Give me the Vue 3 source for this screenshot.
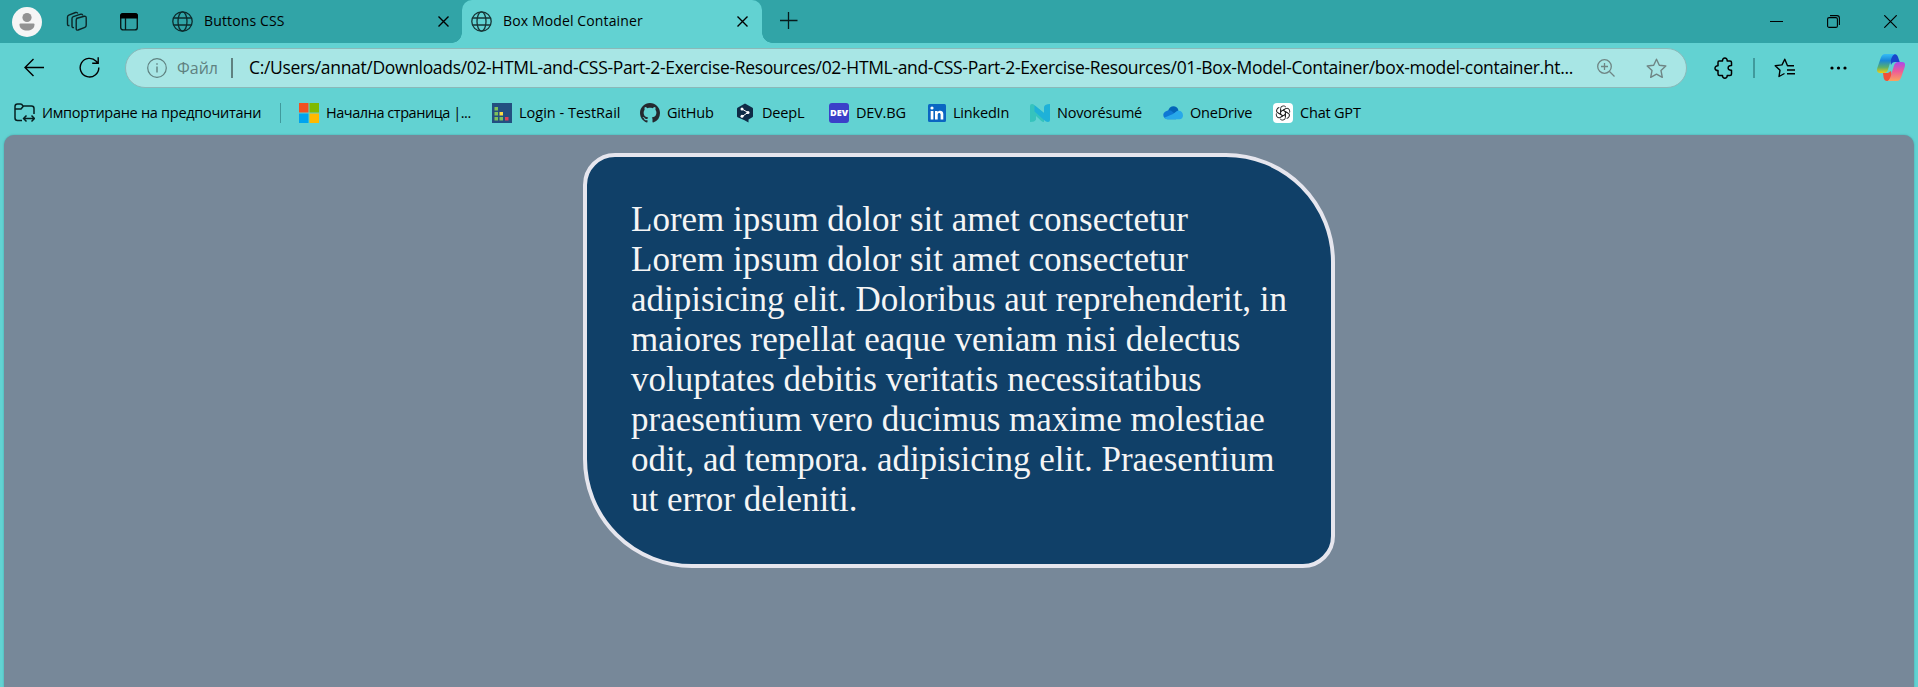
<script setup>
const lines = [
  'Lorem ipsum dolor sit amet consectetur',
  'Lorem ipsum dolor sit amet consectetur',
  'adipisicing elit. Doloribus aut reprehenderit, in',
  'maiores repellat eaque veniam nisi delectus',
  'voluptates debitis veritatis necessitatibus',
  'praesentium vero ducimus maxime molestiae',
  'odit, ad tempora. adipisicing elit. Praesentium',
  'ut error deleniti.',
]
</script>

<template>
  <div class="window">
    <header class="tabstrip">
      <div class="lead">
        <svg class="avatar" width="30" height="30" viewBox="0 0 30 30"><circle cx="15" cy="15" r="15" fill="#f5f5f5"/><circle cx="15" cy="10.5" r="4.6" fill="#929292"/><path d="M8.5 16.500h13q1 0 1 1c0 4-3.500 6-7.500 6s-7.500-2-7.500-6q0-1 1-1z" fill="#929292"/></svg>
        <svg class="spaces" width="22" height="22" viewBox="0 0 22 22" fill="none" stroke="#0c2526" stroke-width="1.400"><path d="M10.200 7.500l8-2.200q2-.4 2 1.500v7.500q0 1.500-1.300 2l-6.800 2.700q-1.900.6-1.900-1.300V9q0-1.200 1-1.500zM8 16.500q-2 .5-2-1.300V7.500q0-1.300 1.300-1.800l7.500-2.500q1.600-.4 1.900 1.300M3.500 14.500Q1.500 15 1.500 13V6q0-1.400 1.300-1.900L9.500 1.500q1.800-.5 2.300 1"/></svg>
        <svg class="vtabs" width="18" height="18" viewBox="0 0 18 18"><rect x=".7" y=".7" width="16.600" height="16.200" rx="2.500" fill="none" stroke="#071c1d" stroke-width="1.400"/><path d="M0 5.500V3q0-3 3-3h12q3 0 3 3v2.500z" fill="#000"/><path d="M5.500 5v12" stroke="#071c1d" stroke-width="1.300"/></svg>
      </div>
      <div class="tab idle">
        <svg class="globe" width="21" height="21" viewBox="0 0 21 21" fill="none" stroke="#0c2b2d" stroke-width="1.300"><circle cx="10.500" cy="10.500" r="9.700"/><ellipse cx="10.500" cy="10.500" rx="4.500" ry="9.700"/><path d="M1.500 7h18M1.500 14h18"/></svg>
        <span>Buttons CSS</span>
        <svg class="x" width="11" height="11" viewBox="0 0 11 11" stroke="#000" stroke-width="1.400"><path d="M.5.500l10 10M10.500.500l-10 10"/></svg>
      </div>
      <div class="tab active">
        <svg class="globe" width="21" height="21" viewBox="0 0 21 21" fill="none" stroke="#173536" stroke-width="1.300"><circle cx="10.500" cy="10.500" r="9.700"/><ellipse cx="10.500" cy="10.500" rx="4.500" ry="9.700"/><path d="M1.500 7h18M1.500 14h18"/></svg>
        <span>Box Model Container</span>
        <svg class="x" width="11" height="11" viewBox="0 0 11 11" stroke="#000" stroke-width="1.400"><path d="M.5.500l10 10M10.500.500l-10 10"/></svg>
      </div>
      <svg class="plus" width="18" height="18" viewBox="0 0 18 18" stroke="#061b1c" stroke-width="1.300"><path d="M0 8.500h17.500M8.500 0v17"/></svg>
      <div class="controls">
        <svg width="13" height="13" viewBox="0 0 13 13" stroke="#000"><path d="M0 6.500h13"/></svg>
        <svg width="13" height="13" viewBox="0 0 13 13" fill="none" stroke="#000" stroke-width="1.100"><rect x=".6" y="2.600" width="9.800" height="9.800" rx="1.500"/><path d="M3 .600h7q2.400 0 2.400 2.400v7"/></svg>
        <svg width="13" height="13" viewBox="0 0 13 13" stroke="#000" stroke-width="1.200"><path d="M.3.300l12.400 12.400M12.700.300L.3 12.700"/></svg>
      </div>
    </header>

    <nav class="toolbar">
      <svg class="back" width="21" height="19" viewBox="0 0 21 19" fill="none" stroke="#000" stroke-width="1.400"><path d="M20 9.500H1M9.500 1L1 9.500 9.500 18"/></svg>
      <svg class="reload" width="21" height="21" viewBox="0 0 21 21" fill="none" stroke="#000" stroke-width="1.400"><path d="M19.800 10.500a9.300 9.300 0 1 1-2.600-6.300l1.800 2M19.200.300v6h-6"/></svg>
      <div class="address">
        <svg class="info" width="20" height="20" viewBox="0 0 20 20" fill="none" stroke="#5f8180" stroke-width="1.200"><circle cx="10" cy="10" r="9.300"/><path d="M10 8.500v6M10 5.300v1.500" stroke-width="1.400"/></svg>
        <span class="file">Файл</span>
        <i class="bar"></i>
        <span class="url">C:/Users/annat/Downloads/02-HTML-and-CSS-Part-2-Exercise-Resources/02-HTML-and-CSS-Part-2-Exercise-Resources/01-Box-Model-Container/box-model-container.ht...</span>
        <svg class="mag" width="19" height="19" viewBox="0 0 19 19" fill="none" stroke="#6f8584" stroke-width="1.300"><circle cx="7.500" cy="7.500" r="6.800"/><path d="M12.500 12.500l5 5M4 7.500h7M7.500 4v7"/></svg>
        <svg class="star" width="21" height="21" viewBox="0 0 21 21" fill="none" stroke="#6f8584" stroke-width="1.400" stroke-linejoin="round"><path d="M10.500 1.200l2.800 6 6.500.8-4.800 4.600 1.300 6.700-5.800-3.200-5.800 3.200L6 12.600 1.200 8l6.500-.8z"/></svg>
      </div>
      <svg class="ext" width="20" height="22" viewBox="0 0 20 22" fill="none" stroke="#000" stroke-width="1.500" stroke-linejoin="round"><path d="M5 4h3.500c-.3-4 5-4 4.700 0H16q1.500 0 1.500 1.500v3c-4.500-.5-4.500 5.300 0 4.800V17q0 1.500-1.500 1.500h-2.800c.3 3.500-5 3.500-4.700 0H5.500Q4 18.500 4 17v-3.500c-4 .3-4-5 0-4.700V5.500Q4 4 5 4z"/></svg>
      <i class="sep"></i>
      <svg class="favs" width="21" height="20" viewBox="0 0 21 20" fill="none" stroke="#000" stroke-width="1.400" stroke-linejoin="round"><path d="M20 7.700h-6.500l-2.700-6.500L8 6.900l-6.800.8L6 12.200l-1 6.300 5.500-3M13 12h8M13 15.800h8"/></svg>
      <svg class="dots" width="17" height="4" viewBox="0 0 17 4"><circle cx="2" cy="2" r="1.600"/><circle cx="8.500" cy="2" r="1.600"/><circle cx="15" cy="2" r="1.600"/></svg>
      <svg class="copilot" width="28" height="27" viewBox="0 0 28 27">
        <defs>
          <linearGradient id="ga" x1="0" y1="0" x2="0" y2="1"><stop offset="0" stop-color="#35bdf5"/><stop offset=".35" stop-color="#1987d8"/><stop offset=".7" stop-color="#5ab06c"/><stop offset="1" stop-color="#f4cc0e"/></linearGradient>
          <linearGradient id="gb" x1="0" y1="0" x2="0" y2="1"><stop offset="0" stop-color="#a94bea"/><stop offset=".5" stop-color="#ee5c97"/><stop offset="1" stop-color="#fba45d"/></linearGradient>
        </defs>
        <path d="M12 0h5q3 0 4 3l1.700 5H18q-3 0-4 3z" fill="#1846cc"/>
        <path d="M6 19h5l3-2 1 6-4 4h-1q-2.500 0-3.300-3z" fill="#ef5038"/>
        <path d="M8 0h10q-2.500 1-3.500 4L11 15.500Q10 19 6.500 19H3q-4 0-2.700-5L3.700 4Q5 0 8 0z" fill="url(#ga)"/>
        <path d="M20 27H10.500q2-1 3-4L17 11.500Q18 8 21 8h4q4 0 2.700 5l-3.400 10Q23 27 20 27z" fill="url(#gb)"/>
      </svg>
    </nav>

    <nav class="bookmarks">
      <a class="b0">
        <svg width="21" height="20" viewBox="0 0 21 20" fill="none" stroke="#062021" stroke-width="1.500" stroke-linejoin="round"><path d="M8 17.500H3.500Q1 17.500 1 15V3.500Q1 1 3.500 1h3Q8 1 9 3h8.500Q20 3 20 5.500V11M1 6h6l2.500-3M10 15.500h10M12.500 12.500l-3 3 3 3M17.500 12.500l3 3-3 3"/></svg>
        <span>Импортиране на предпочитани</span>
      </a>
      <i class="sep"></i>
      <a class="b1">
        <svg width="20" height="20" viewBox="0 0 20 20"><path fill="#f25022" d="M0 0h9.500v9.500H0z"/><path fill="#7fba00" d="M10.500 0H20v9.500h-9.500z"/><path fill="#00a4ef" d="M0 10.500h9.500V20H0z"/><path fill="#ffb900" d="M10.500 10.500H20V20h-9.500z"/></svg>
        <span>Начална страница |...</span>
      </a>
      <a class="b2">
        <svg width="20" height="20" viewBox="0 0 20 20"><path fill="#234f80" d="M0 0h20v20H0z"/><path fill="#7dc15b" d="M2.500 4H6v3.500H2.500zM2.500 9H6v3.500H2.500zM2.500 14H6v3.500H2.500zM7.500 14H11v3.500H7.500z"/><path fill="#f8dc45" d="M7.500 9H11v3.500H7.500z"/><path fill="#dc405a" d="M13 14h3.500v3.500H13z"/></svg>
        <span>Login - TestRail</span>
      </a>
      <a class="b3">
        <svg width="20" height="20" viewBox="0 0 16 16" fill="#24292f"><path d="M8 0C3.580 0 0 3.580 0 8c0 3.540 2.290 6.530 5.470 7.590.4.070.55-.17.55-.38 0-.19-.01-.82-.01-1.490-2.010.37-2.530-.49-2.690-.94-.09-.23-.48-.94-.82-1.130-.28-.15-.68-.52-.01-.53.630-.010 1.080.58 1.230.82.720 1.210 1.870.87 2.330.66.070-.52.280-.87.510-1.070-1.780-.2-3.640-.89-3.640-3.950 0-.87.310-1.590.82-2.150-.08-.2-.36-1.020.080-2.120 0 0 .67-.21 2.200.82.640-.18 1.320-.27 2-.27s1.360.09 2 .27c1.530-1.040 2.200-.82 2.200-.82.440 1.100.160 1.920.080 2.120.510.560.82 1.270.82 2.150 0 3.070-1.870 3.750-3.650 3.950.290.250.54.730.54 1.480 0 1.070-.01 1.930-.01 2.200 0 .21.150.46.550.38A8.010 8.010 0 0 0 16 8c0-4.420-3.580-8-8-8z"/></svg>
        <span>GitHub</span>
      </a>
      <a class="b4">
        <svg width="20" height="20" viewBox="0 0 20 20"><path d="M10 .5l7.500 4.200q.5.300.5 1v7.500q0 .7-.6 1L13.500 16.500V19.500L9 17 2.600 14.200q-.6-.3-.6-1V5.700q0-.7.500-1z" fill="#0f2b46"/><path d="M7 6l6 3.500L7 13.500" fill="none" stroke="#fff" stroke-width="1"/><g fill="#fff"><circle cx="7" cy="6" r="1.500"/><circle cx="13" cy="9.600" r="1.500"/><circle cx="7" cy="13.200" r="1.500"/></g></svg>
        <span>DeepL</span>
      </a>
      <a class="b5">
        <svg width="20" height="20" viewBox="0 0 20 20"><rect width="20" height="20" rx="3" fill="#3b40c9"/><text x="1" y="13" textLength="18" lengthAdjust="spacingAndGlyphs" font-size="8" font-weight="800" fill="#fff">DEV</text></svg>
        <span>DEV.BG</span>
      </a>
      <a class="b6">
        <svg width="18" height="18" viewBox="0 0 18 18"><rect width="18" height="18" rx="1.500" fill="#0a66c2"/><path fill="#fff" d="M2.700 7h2.700v8.500H2.700zM7 7h2.600v1.200C11 6 15.300 6.200 15.300 10v5.500h-2.700v-5c0-2.200-2.900-2-2.900 0v5H7z"/><circle cx="4" cy="4" r="1.600" fill="#fff"/></svg>
        <span>LinkedIn</span>
      </a>
      <a class="b7">
        <svg width="20" height="18" viewBox="0 0 20 18"><path d="M2 0q1.200 0 2.500 1.200L14 9v9q-1.500 0-3-1.300L6 12v3.500Q5 18 0 18V2Q0 0 2 0z" fill="#36c3bd"/><path d="M14 3.500Q14 0 20 0v16q0 2-2 2-2 0-4-2L4.500 7.500V1.200L14 9z" fill="#1fb1d8"/></svg>
        <span>Novorésumé</span>
      </a>
      <a class="b8">
        <svg width="20" height="14" viewBox="0 0 20 14"><path d="M5 5.500C6-1 14-1.500 15.500 4.500L10 9z" fill="#0364b8"/><path d="M4.500 13.300C-.5 13-1.300 6.500 3.500 5c3-1.500 5 0 6.500 1.300L15 10l-2 3.300z" fill="#0f78d4"/><path d="M10 8l4-3c3.500-1 6 1.300 6 4.500 0 2.300-1.500 3.800-3.500 3.800h-12q-2 0-3.300-1.500z" fill="#28a8ea"/></svg>
        <span>OneDrive</span>
      </a>
      <a class="b9">
        <svg width="20" height="20" viewBox="0 0 20 20"><rect width="20" height="20" rx="4" fill="#fff"/><g fill="none" stroke="#222" stroke-width=".9"><path id="petal" d="M7.600 11.400V5.600q0-2.700 2.700-2.700 1.700 0 2.600 1.200M7.600 8.600l4.800-2.700"/><use href="#petal" transform="rotate(60 10 10)"/><use href="#petal" transform="rotate(120 10 10)"/><use href="#petal" transform="rotate(180 10 10)"/><use href="#petal" transform="rotate(240 10 10)"/><use href="#petal" transform="rotate(300 10 10)"/></g></svg>
        <span>Chat GPT</span>
      </a>
    </nav>

    <main class="page">
      <article class="card">
        <div v-for="(l, i) in lines" :key="i" class="line">{{ l }}</div>
      </article>
    </main>
  </div>
</template>

<style>
body { margin: 0; overflow: hidden; }
</style>

<style scoped>
* { box-sizing: border-box; }
svg { display: block; flex: none; }
i, span { flex: none; }
.window { width: 1918px; height: 687px; display: flex; flex-direction: column; background: #62d2d2; color: #000; font: 14.5px/20px "Open Sans", "Noto Sans", sans-serif; white-space: nowrap; overflow: hidden; }
.tabstrip { height: 43px; flex: none; display: flex; background: #31a4a7; }
.lead { width: 163px; display: flex; align-items: center; padding-left: 12px; flex: none; }
.lead::after { content: ""; width: 1px; height: 25px; background: #16686a; margin-left: 25px; }
.spaces { margin-left: 24px; }
.vtabs { margin-left: 32px; }
.tab { display: flex; align-items: center; flex: none; }
.idle { width: 299px; padding: 0 13px 0 9px; }
.active { width: 300px; padding: 0 14px 0 9px; background: #62d2d2; border-radius: 10px 10px 0 0; position: relative; }
.active::before, .active::after { content: ""; position: absolute; bottom: 0; width: 10px; height: 10px; }
.active::before { left: -10px; background: radial-gradient(circle at 0 0, transparent 9.500px, #62d2d2 10px); }
.active::after { right: -10px; background: radial-gradient(circle at 100% 0, transparent 9.500px, #62d2d2 10px); }
.tab span { margin: -2px 0 0 11px; font-size: 14px; letter-spacing: .13px; }
.tab .x { margin-left: auto; }
.plus { margin: 12px 0 0 18px; }
.controls { margin-left: auto; display: flex; align-items: center; gap: 44px; padding-right: 21px; }
.toolbar { height: 49px; flex: none; display: flex; align-items: center; padding-left: 24px; }
.back { margin-top: -1px; }
.reload { margin-left: 34px; }
.address { margin-left: 25px; width: 1562px; height: 40px; border: 1px solid #8ab9b9; border-radius: 20px; background: #a8e6e5; display: flex; align-items: center; padding-left: 21px; margin-top: 1px; flex: none; }
.file { margin-left: 10px; color: #5f8180; font-size: 16px; width: 41px; }
.bar { width: 2px; height: 20px; background: #5f8180; margin-left: 13px; }
.url { margin-left: 16px; margin-top: -2px; width: 1328px; font-size: 17.500px; letter-spacing: -.335px; }
.mag { margin-left: 20px; }
.star { margin-left: 30px; }
.ext { margin-left: 27px; }
.toolbar .sep { width: 2px; height: 20px; background: #409a9c; margin-left: 19px; }
.favs { margin-left: 19px; }
.dots { margin-left: 35px; }
.copilot { margin-left: 30px; }
.bookmarks { height: 43px; flex: none; display: flex; align-items: center; padding: 0 0 1px 14px; }
.bookmarks a { display: flex; align-items: center; gap: 7px; flex: none; }
.bookmarks a span { margin-top: -1px; letter-spacing: -.2px; }
.bookmarks .sep { width: 1px; height: 20px; background: #409a9c; }
.b0 { width: 266px; }
.bookmarks .b0 span { letter-spacing: -.28px; }
.bookmarks .b1 { width: 193px; margin-left: 18px; }
.bookmarks .b1 span { letter-spacing: -.45px; }
.b2 { width: 148px; }
.bookmarks .b2 span { letter-spacing: 0; }
.b3 { width: 95px; }
.b4 { width: 94px; }
.b5 { width: 99px; }
.b6 { width: 102px; }
.b7 { width: 133px; }
.b8 { width: 110px; }
.page { flex: 1; margin: 0 4px; background: #778899; border-radius: 10px 10px 0 0; padding-top: 18px; box-shadow: 0 0 2px rgba(40, 110, 115, .5); }
.card { width: 752px; height: 415px; margin-left: 579px; border: 4px solid #e6e6ee; border-radius: 32px 109px; background: #104068; color: #f5f5f5; padding: 43px 0 0 44px; font: 35px/40px "Liberation Serif", serif; }
</style>
